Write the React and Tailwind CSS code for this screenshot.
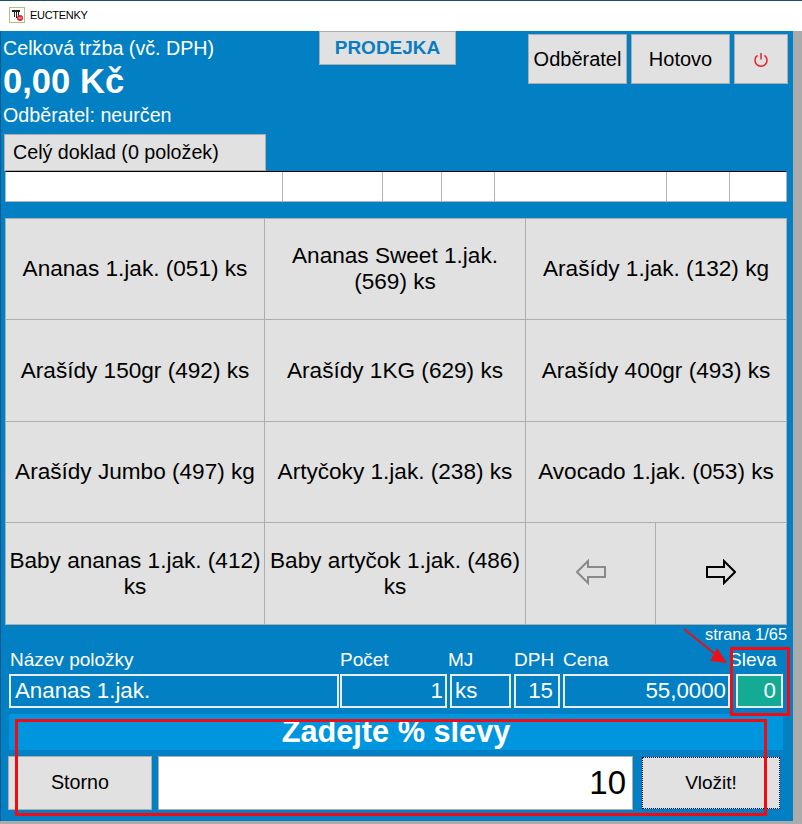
const items = [
  "Ananas 1.jak. (051) ks",
  "Ananas Sweet 1.jak. (569) ks",
  "Arašídy 1.jak. (132) kg",
  "Arašídy 150gr (492) ks",
  "Arašídy 1KG (629) ks",
  "Arašídy 400gr (493) ks",
  "Arašídy Jumbo (497) kg",
  "Artyčoky 1.jak. (238) ks",
  "Avocado 1.jak. (053) ks",
  "Baby ananas 1.jak. (412) ks",
  "Baby artyčok 1.jak. (486) ks",
];

function Cell({ children, className = "" }) {
  return (
    <div className={"flex items-center justify-center text-center bg-[#e1e1e1] border border-[#adadad] text-[22.6px] leading-[26px] text-black -ml-px -mt-px " + className}>
      {children}
    </div>
  );
}

function Arrow({ left, color }) {
  return (
    <svg className="mb-[3px]" width="30" height="26" viewBox="0 0 30 26" style={{ transform: left ? "scaleX(-1)" : undefined }}>
      <path d="M1 8 H18 V2 L29 13 L18 24 V18 H1 Z" fill="none" stroke={color} strokeWidth="2" />
    </svg>
  );
}

function Field({ className = "", children }) {
  return (
    <div className={"h-[34px] border-2 border-[#e6eef4] flex items-center text-[22.3px] text-white " + className}>
      {children}
    </div>
  );
}

export default function App() {
  return (
    <div className="w-[802px] h-[824px] flex flex-col bg-[#ababab] overflow-hidden" style={{ fontFamily: '"Liberation Sans", Arial, sans-serif' }}>
      <div className="h-[31px] shrink-0 border-t border-[#1d4f6e] flex items-center pl-[9px] pb-[2px] bg-white">
        <svg width="16" height="16" viewBox="0 0 16 16" className="shrink-0">
          <rect x="0.5" y="0.5" width="15" height="15" fill="#fff" stroke="#a9c47f" />
          <path d="M3 3h8v2h-1v6H9V5H8v6H7V5H6v5H5V5H3z" fill="#222" />
          <circle cx="11" cy="11" r="3" fill="#e8202a" />
          <rect x="9.5" y="10.5" width="3" height="1" fill="#fff" />
        </svg>
        <span className="ml-[5px] text-[11px] tracking-[-0.3px] text-black">EUCTENKY</span>
      </div>

      <div className="flex">
        <div className="relative w-[793px] h-[790px] bg-[#0280c3] border-l border-[#0b5c8a]">
          {/* header */}
          <div className="flex h-[103px]">
            <div className="w-[318px] pl-[2px] text-white">
              <div className="text-[19.7px] leading-[23px] mt-[6px]">Celková tržba (vč. DPH)</div>
              <div className="text-[34.6px] leading-[40px] font-bold mt-[1px]">0,00 Kč</div>
              <div className="text-[19.7px] leading-[23px] mt-[3px]">Odběratel: neurčen</div>
            </div>
            <div className="w-[137px] h-[34px] bg-[#e1e1e1] border border-[#adadad] flex items-center justify-center text-[19px] font-bold text-[#0a7cc0]">
              PRODEJKA
            </div>
            <div className="ml-[72px] mt-[3px] flex gap-[4px] h-[50px]">
              <div className="w-[99px] bg-[#e1e1e1] border border-[#adadad] flex items-center justify-center text-[20px] text-black">Odběratel</div>
              <div className="w-[99px] bg-[#e1e1e1] border border-[#adadad] flex items-center justify-center text-[20px] text-black">Hotovo</div>
              <div className="w-[54px] bg-[#e1e1e1] border border-[#adadad] flex items-center justify-center">
                <svg width="14" height="15" viewBox="0 0 14 15" fill="none" stroke="#e8212b" strokeWidth="1.5">
                  <path d="M7 1v6.5" />
                  <path d="M3.6 3.3a6 6 0 1 0 6.8 0" />
                </svg>
              </div>
            </div>
          </div>

          {/* tab */}
          <div className="ml-[3px] w-[262px] h-[37px] bg-[#e1e1e1] border border-[#adadad] flex items-center pl-[8px] text-[19.7px] text-black">
            Celý doklad (0 položek)
          </div>

          {/* table */}
          <div className="ml-[4px] w-[782px] h-[31px] bg-white border border-[#b4b4b4] border-t-black flex">
            <div className="w-[277px] border-r border-[#b4b4b4]" />
            <div className="w-[100px] border-r border-[#b4b4b4]" />
            <div className="w-[59px] border-r border-[#b4b4b4]" />
            <div className="w-[53px] border-r border-[#b4b4b4]" />
            <div className="w-[172px] border-r border-[#b4b4b4]" />
            <div className="w-[63px] border-r border-[#b4b4b4]" />
          </div>

          {/* product grid */}
          <div className="ml-[5px] mt-[17px] grid grid-cols-[259px_261px_261px] grid-rows-[101px_102px_101px_102px] w-[781px]">
            {items.map((t) => (
              <Cell key={t}>{t}</Cell>
            ))}
            <div className="grid grid-cols-[130px_131px]">
              <Cell><Arrow left color="#8a8a8a" /></Cell>
              <Cell><Arrow color="#000" /></Cell>
            </div>
          </div>

          <div className="w-[786px] text-right text-[16.4px] leading-[17px] text-white mt-[1px]">strana 1/65</div>

          {/* labels */}
          <div className="flex text-[19px] leading-[21px] text-white mt-[6px] h-[21px]">
            <div className="ml-[9px] w-[330px]">Název položky</div>
            <div className="w-[108px]">Počet</div>
            <div className="w-[66px]">MJ</div>
            <div className="w-[49px]">DPH</div>
            <div className="w-[166px]">Cena</div>
            <div className="text-white">Sleva</div>
          </div>

          {/* fields */}
          <div className="flex mt-[4px]">
            <Field className="ml-[8px] w-[330px] pl-[4px]">Ananas 1.jak.</Field>
            <Field className="ml-[1px] w-[107px] justify-end pr-[2px]">1</Field>
            <Field className="ml-[3px] w-[61px] pl-[3px]">ks</Field>
            <Field className="ml-[3px] w-[46px] justify-end pr-[5px]">15</Field>
            <Field className="ml-[3px] w-[167px] justify-end pr-[2px]">55,0000</Field>
            <Field className="ml-[6px] w-[47px] justify-end pr-[5px] bg-[#14ab94]">0</Field>
          </div>

          {/* banner */}
          <div className="ml-[8px] mt-[6px] w-[774px] h-[36px] pt-px bg-[#0096df] flex items-center justify-center text-[30.7px] font-bold text-white">
            Zadejte % slevy
          </div>

          {/* input row */}
          <div className="flex mt-[6px] h-[54px]">
            <div className="ml-[7px] w-[144px] bg-[#e1e1e1] border border-[#adadad] flex items-center justify-center text-[19.7px] text-black">Storno</div>
            <div className="ml-[6px] w-[475px] bg-white border border-[#adadad] flex items-center justify-end pr-[6px] text-[33px] text-black">10</div>
            <div className="ml-[8px] w-[140px] bg-[#e1e1e1] border border-[#0078d7] flex items-center justify-center text-[19px] text-black outline-1 outline-dotted outline-black -outline-offset-2">Vložit!</div>
          </div>

          {/* annotations */}
          <div className="absolute left-[729px] top-[616px] w-[60px] h-[69px] border-[3px] border-[#f50a12]" />
          <div className="absolute left-[14px] top-[688px] w-[752px] h-[97px] border-[3px] border-[#f50a12]" />
          <svg className="absolute left-[680px] top-[595px]" width="52" height="42" viewBox="0 0 52 42">
            <path d="M3 3 L34 28" stroke="#e8111a" strokeWidth="2" />
            <path d="M46 37 L29 35 L36 22 Z" fill="#e8111a" />
          </svg>
        </div>
        <div className="w-[9px] bg-[#ababab]" />
      </div>
    </div>
  );
}
